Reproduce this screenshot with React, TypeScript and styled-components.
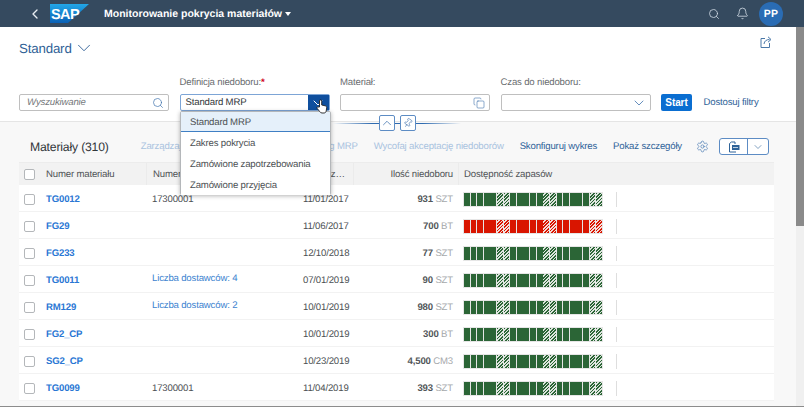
import React from "react";
import styled, { createGlobalStyle } from "styled-components";
import { ChevronLeft, ChevronDown, ChevronUp, Search, Bell, Copy, Settings, Pin } from "lucide-react";

const Global = createGlobalStyle`
  html, body { margin: 0; padding: 0; height: 100%; overflow: hidden; background: #fff; }
  * { box-sizing: border-box; }
  body { font-family: "Liberation Sans", Arial, sans-serif; color: #32363a; text-rendering: geometricPrecision; }
`;

const Page = styled.div`
  width: 804px; height: 407px; display: flex; flex-direction: column; overflow: hidden;
  border-bottom: 1px solid #8c8c8c; position: relative;
`;
const ShellBar = styled.header`
  height: 27px; flex: none; background: #354a5f; display: flex; align-items: center; padding: 0 21px 0 27px; color: #fff;
`;
const BackButton = styled.span`
  width: 23px; display: flex; color: #e8edf2;
`;
const AppTitle = styled.div`
  font-size: 10.5px; font-weight: 700; margin-left: 15px; color: #fff; display: flex; align-items: center; gap: 3px; white-space: nowrap;
`;
const Caret = styled.span`
  width: 0; height: 0; border: 3.5px solid transparent; border-top: 4px solid #fff; border-bottom: 0;
`;
const ShellActions = styled.div`
  margin-left: auto; display: flex; align-items: center; color: #d1dbe5;
`;
const ShellIcon = styled.span`
  display: flex; width: 29px; justify-content: center;
`;
const Avatar = styled.div`
  width: 24px; height: 24px; border-radius: 50%; background: #2a6cb4; color: #fff; font-size: 10.5px; font-weight: 700;
  display: flex; align-items: center; justify-content: center; margin-left: 2px; letter-spacing: .2px;
`;
const Body = styled.div`
  flex: 1; display: flex; min-height: 0;
`;
const Main = styled.main`
  flex: 1; min-width: 0; display: flex; flex-direction: column; background: #f8f8f8; position: relative; letter-spacing: -.17px;
`;
const FilterBar = styled.section`
  height: 95px; flex: none; background: #fff; border-bottom: 1px solid #e5e5e5; padding: 12px 19px 0;
`;
const VariantRow = styled.div`
  display: flex; align-items: center; height: 18px;
`;
const VariantName = styled.div`
  font-size: 13.3px; color: #2f5f96;
`;
const VariantChevron = styled.span`
  display: flex; margin-left: 1px; color: #2f5f96;
`;
const ShareIcon = styled.svg`
  display: block; margin-left: auto; margin-right: 5px; margin-top: -12px; color: #4a78a8;
`;
const FilterRow = styled.div`
  display: flex; align-items: flex-end; margin-top: 20px; gap: 10.5px;
`;
const Field = styled.div`
  width: 150px; display: flex; flex-direction: column; gap: 5px;
`;
const Label = styled.label`
  font-size: 9.6px; line-height: 12px; color: #6a6d70;
  b { color: #d0021b; font-weight: 700; }
`;
const InputBox = styled.div<{ $active?: boolean }>`
  height: 17px; background: #fff; display: flex; align-items: center;
  border: 1px solid ${p => (p.$active ? "#7da5d6" : "#bfbfbf")}; border-radius: 2px; font-size: 9.6px; color: #32363a;
`;
const InputText = styled.span<{ $hint?: boolean }>`
  flex: 1; padding: 0 0 1px ${p => (p.$hint ? 7 : 5)}px; font-style: ${p => (p.$hint ? "italic" : "normal")};
  color: ${p => (p.$hint ? "#75787b" : "#32363a")}; white-space: nowrap;
`;
const InputIcon = styled.span<{ $active?: boolean }>`
  width: 21px; height: 100%; display: flex; align-items: center; justify-content: center;
  background: ${p => (p.$active ? "#0f4f9e" : "transparent")}; color: ${p => (p.$active ? "#fff" : "#3f72ad")};
`;
const StartButton = styled.button`
  height: 17px; width: 31px; margin-left: 0; padding: 0; border: 0; border-radius: 2px; background: #0a6ed1; color: #fff;
  font: 700 10px "Liberation Sans", Arial, sans-serif; letter-spacing: -.1px;
`;
const AdaptLink = styled.a`
  font-size: 9.6px; color: #2f6398; margin-left: 1px; padding-bottom: 3px; white-space: nowrap;
`;
const Collapse = styled.div`
  position: absolute; left: 333px; top: 88px; width: 128px; height: 16px; display: flex; justify-content: center; align-items: center; gap: 5px;
  &::before { content: ""; position: absolute; left: 0; right: 0; top: 8px; height: 1px; background: linear-gradient(90deg, transparent, #2f6bb0 30%, #2f6bb0 70%, transparent); }
`;
const CollapseButton = styled.span`
  position: relative; width: 16px; height: 16px; border: 1px solid #5d8cc4; border-radius: 2px; background: #fff; color: #3f72ad;
  display: flex; align-items: center; justify-content: center;
`;
const TableArea = styled.section`
  margin: 8px 22px 0 19px; display: flex; flex-direction: column; min-width: 0;
`;
const Toolbar = styled.div`
  height: 32px; display: flex; align-items: center; padding: 1px 5px 0 11px; font-size: 9.6px; position: relative;
`;
const TableTitle = styled.h2`
  margin: 0; font-size: 12.2px; font-weight: 400; color: #32363a; white-space: nowrap;
`;
const ToolActions = styled.div`
  margin-left: auto; display: flex; align-items: center; gap: 16px; white-space: nowrap;
`;
const ToolLink = styled.a<{ $off?: boolean }>`
  color: ${p => (p.$off ? "#a9c3df" : "#2f6398")};
`;
const GearIcon = styled.span`
  display: flex; color: #3f72ad; margin: 0 -6px 0 -2px;
`;
const SplitButton = styled.div`
  display: flex; height: 17px; width: 50px; border: 1px solid #5d8cc4; border-radius: 3px; background: #fff; color: #2f6398; flex: none;
`;
const SplitMain = styled.span`
  flex: 1; display: flex; align-items: center; justify-content: center; border-right: 1px solid #5d8cc4;
`;
const SplitSide = styled.span`
  width: 20px; display: flex; align-items: center; justify-content: center;
`;
const Grid = "27px 100px 154px 53px 105px 1fr";
const HeaderRow = styled.div`
  display: grid; grid-template-columns: ${Grid}; height: 23px; background: #f2f2f2; border-top: 1px solid #ececec; align-items: center;
  font-size: 9.6px; color: #4f5356;
`;
const HeaderCell = styled.div<{ $right?: boolean; $sep?: boolean; $pad: number }>`
  height: 100%; display: flex; align-items: center; min-width: 0; padding: 0 5px 0 ${p => p.$pad}px;
  justify-content: ${p => (p.$right ? "flex-end" : "flex-start")};
  border-left: ${p => (p.$sep ? "1px solid #ebebeb" : "0")}; white-space: nowrap;
`;
const Ellipsis = styled.span`
  overflow: hidden; text-overflow: ellipsis; display: block; width: 43px;
`;
const Row = styled.div`
  display: grid; grid-template-columns: ${Grid}; height: 27px; padding-top: 2px; background: #fff; border-bottom: 1.5px solid #f2f2f2; align-items: center;
  font-size: 9.6px; color: #4c5053;
`;
const CheckCell = styled.div`
  display: flex; padding-left: 5px;
`;
const Check = styled.span`
  display: block; width: 11px; height: 11px; border: 1px solid #b4b7ba; border-radius: 2px; background: #fff;
`;
const MaterialLink = styled.a`
  font-weight: 700; color: #2a77d4;
`;
const Supplier = styled.div<{ $link?: boolean }>`
  padding-left: 6px; color: ${p => (p.$link ? "#3c83cf" : "#4c5053")}; margin-bottom: ${p => (p.$link ? 3 : 0)}px; 
`;
const DateCell = styled.div`
  padding-left: 3px;
`;
const Qty = styled.div`
  text-align: right; padding-right: 5px; color: #53575a; font-weight: 700;
  span { color: #a5a8ab; font-weight: 400; }
`;
const ChartCell = styled.div`
  display: flex; align-items: center; padding-left: 5px; height: 100%;
`;
const Chart = styled.div`
  display: flex; width: 140px; height: 15px; background: #e6e6e6; padding: 1px 1px; gap: 0.8px;
`;
const Bar = styled.i<{ $hatch: boolean; $color: string; $light: string }>`
  flex: 1; display: block;
  background: ${p => p.$hatch
    ? `repeating-linear-gradient(135deg, ${p.$color} 0 1.2px, ${p.$light} 1.2px 2.4px)`
    : p.$color};
`;
const Tick = styled.span`
  width: 1px; height: 15px; background: #dedede; margin-left: 13px;
`;
const Scrollbar = styled.aside`
  width: 8px; flex: none; background: #f0f0f0;
`;
const Thumb = styled.div`
  height: 199px; background: #8a8a8a; margin-left: 0;
`;
const Dropdown = styled.ul`
  position: absolute; left: 180px; top: 84px; width: 151px; height: 84px; margin: 0; padding: 0; list-style: none; background: #fff;
  border: 1px solid #b4b7ba; border-radius: 2px; box-shadow: 0 1px 4px rgba(0,0,0,.3); z-index: 5; font-size: 9.6px; color: #4c5053;
`;
const Option = styled.li<{ $selected?: boolean }>`
  height: ${p => (p.$selected ? 20 : 21)}px; display: flex; align-items: center; padding: 1px 0 0 9px;
  background: ${p => (p.$selected ? "#e5f0fa" : "#fff")}; border-bottom: ${p => (p.$selected ? "1px solid #3f7fc4" : "0")};
  white-space: nowrap;
`;
const Cursor = styled.svg`
  position: absolute; left: 316px; top: 99px; z-index: 6;
`;
const Logo = styled.span`
  display: flex; margin-left: 0;
`;

const LogoSvg = () => (
  <svg width="39" height="19" viewBox="0 0 39 19" aria-label="SAP">
    <defs>
      <linearGradient id="sap" x1="0" y1="0" x2="0" y2="1">
        <stop offset="0" stopColor="#22a7e8" />
        <stop offset="1" stopColor="#0a60b5" />
      </linearGradient>
    </defs>
    <polygon points="0,0 39,0 18,19 0,19" fill="url(#sap)" />
    <text x="1" y="14.5" fontFamily="Liberation Sans" fontWeight="700" fontSize="14.5" letterSpacing="-.6" fill="#fff">SAP</text>
  </svg>
);

const pattern = [false,false,false,false,false,true,true,false,false,false,false,false,true,true,false,false,false,false,false,true,true];

const StockChart = ({ red }: { red?: boolean }) => (
  <ChartCell>
    <Chart>
      {pattern.map((h, i) => (
        <Bar key={i} $hatch={h} $color={red ? "#d91500" : "#2b6536"} $light={red ? "#f5dcd8" : "#dde5dd"} />
      ))}
    </Chart>
    <Tick />
  </ChartCell>
);

const rows = [
  { m: "TG0012", s: "17300001", d: "11/01/2017", q: "931", u: "SZT" },
  { m: "FG29", s: "", d: "11/06/2017", q: "700", u: "BT", red: true },
  { m: "FG233", s: "", d: "12/10/2018", q: "77", u: "SZT" },
  { m: "TG0011", s: "Liczba dostawców: 4", link: true, d: "07/01/2019", q: "90", u: "SZT" },
  { m: "RM129", s: "Liczba dostawców: 2", link: true, d: "10/01/2019", q: "980", u: "SZT" },
  { m: "FG2_CP", s: "", d: "10/01/2019", q: "300", u: "BT" },
  { m: "SG2_CP", s: "", d: "10/23/2019", q: "4,500", u: "CM3" },
  { m: "TG0099", s: "17300001", d: "11/04/2019", q: "393", u: "SZT" },
];

export default function App() {
  return (
    <Page>
      <Global />
      <ShellBar>
        <BackButton><ChevronLeft size={16} strokeWidth={2} /></BackButton>
        <Logo><LogoSvg /></Logo>
        <AppTitle>Monitorowanie pokrycia materiałów <Caret /></AppTitle>
        <ShellActions>
          <ShellIcon><Search size={12} strokeWidth={1.6} /></ShellIcon>
          <ShellIcon><Bell size={13} strokeWidth={1.5} /></ShellIcon>
          <Avatar>PP</Avatar>
        </ShellActions>
      </ShellBar>
      <Body>
        <Main>
          <FilterBar>
            <VariantRow>
              <VariantName>Standard</VariantName>
              <VariantChevron><ChevronDown size={22} strokeWidth={1} /></VariantChevron>
              <ShareIcon width="12" height="12" viewBox="0 0 12 12" fill="none" stroke="currentColor" strokeWidth="1">
                <path d="M5 2.5H1v9h8.5V7" />
                <path d="M4 8c.3-3 2.5-4.5 5.5-4.5" />
                <path d="M8 .8l3 2.7-3 2.7" />
              </ShareIcon>
            </VariantRow>
            <FilterRow>
              <Field>
                <InputBox><InputText $hint>Wyszukiwanie</InputText><InputIcon><Search size={12} strokeWidth={1.4} /></InputIcon></InputBox>
              </Field>
              <Field>
                <Label>Definicja niedoboru:<b>*</b></Label>
                <InputBox $active><InputText>Standard MRP</InputText><InputIcon $active><ChevronDown size={16} strokeWidth={1.5} /></InputIcon></InputBox>
              </Field>
              <Field>
                <Label>Materiał:</Label>
                <InputBox><InputText /><InputIcon><Copy size={12} strokeWidth={1.2} /></InputIcon></InputBox>
              </Field>
              <Field>
                <Label>Czas do niedoboru:</Label>
                <InputBox><InputText /><InputIcon><ChevronDown size={16} strokeWidth={1.2} /></InputIcon></InputBox>
              </Field>
              <StartButton>Start</StartButton>
              <AdaptLink>Dostosuj filtry</AdaptLink>
            </FilterRow>
          </FilterBar>
          <Collapse>
            <CollapseButton><ChevronUp size={14} strokeWidth={1.3} /></CollapseButton>
            <CollapseButton><Pin size={10} strokeWidth={1.4} style={{ transform: "rotate(35deg)" }} /></CollapseButton>
          </Collapse>
          <TableArea>
            <Toolbar>
              <TableTitle>Materiały (310)</TableTitle>
              <ToolActions>
                <ToolLink $off>Zarządzaj niedoborami materiałów</ToolLink>
                <ToolLink $off>Przebieg MRP</ToolLink>
                <ToolLink $off>Wycofaj akceptację niedoborów</ToolLink>
                <ToolLink>Skonfiguruj wykres</ToolLink>
                <ToolLink>Pokaż szczegóły</ToolLink>
                <GearIcon><Settings size={13} strokeWidth={1.2} /></GearIcon>
                <SplitButton>
                  <SplitMain>
                    <svg width="13" height="12" viewBox="0 0 13 12" fill="none" stroke="currentColor" strokeWidth="1">
                      <path d="M2.5 11V2.5L4.5 1H8V3" />
                      <path d="M2.5 11H9" />
                      <rect x="5" y="4" width="7.5" height="5" fill="currentColor" stroke="none" />
                      <path d="M6 6.5h5" stroke="#fff" strokeWidth=".7" />
                    </svg>
                  </SplitMain>
                  <SplitSide><ChevronDown size={12} strokeWidth={1.2} /></SplitSide>
                </SplitButton>
              </ToolActions>
            </Toolbar>
            <HeaderRow>
              <CheckCell><Check /></CheckCell>
              <HeaderCell $pad={0}>Numer materiału</HeaderCell>
              <HeaderCell $sep $pad={6}>Numer dostawcy</HeaderCell>
              <HeaderCell $pad={3}><Ellipsis>Pierwszy niedobór</Ellipsis></HeaderCell>
              <HeaderCell $right $sep $pad={0}>Ilość niedoboru</HeaderCell>
              <HeaderCell $sep $pad={5}>Dostępność zapasów</HeaderCell>
            </HeaderRow>
            {rows.map(r => (
              <Row key={r.m}>
                <CheckCell><Check /></CheckCell>
                <MaterialLink>{r.m}</MaterialLink>
                <Supplier $link={r.link}>{r.s}</Supplier>
                <DateCell>{r.d}</DateCell>
                <Qty>{r.q} <span>{r.u}</span></Qty>
                <StockChart red={r.red} />
              </Row>
            ))}
          </TableArea>
          <Dropdown>
            <Option $selected>Standard MRP</Option>
            <Option>Zakres pokrycia</Option>
            <Option>Zamówione zapotrzebowania</Option>
            <Option>Zamówione przyjęcia</Option>
          </Dropdown>
        </Main>
        <Scrollbar><Thumb /></Scrollbar>
      </Body>
      <Cursor width="12" height="15" viewBox="0 0 12 15">
        <path d="M3.5 8V2a1.1 1.1 0 0 1 2.2 0v4l3.5.8c1 .3 1.6 1 1.5 2L10.2 12c-.2 1.2-1 2-2.2 2H6c-1 0-1.6-.5-2.2-1.3L1.2 9.4c-.8-1.2.8-2.2 1.6-1.2z" fill="#fff" stroke="#222" strokeWidth=".9" />
      </Cursor>
    </Page>
  );
}
